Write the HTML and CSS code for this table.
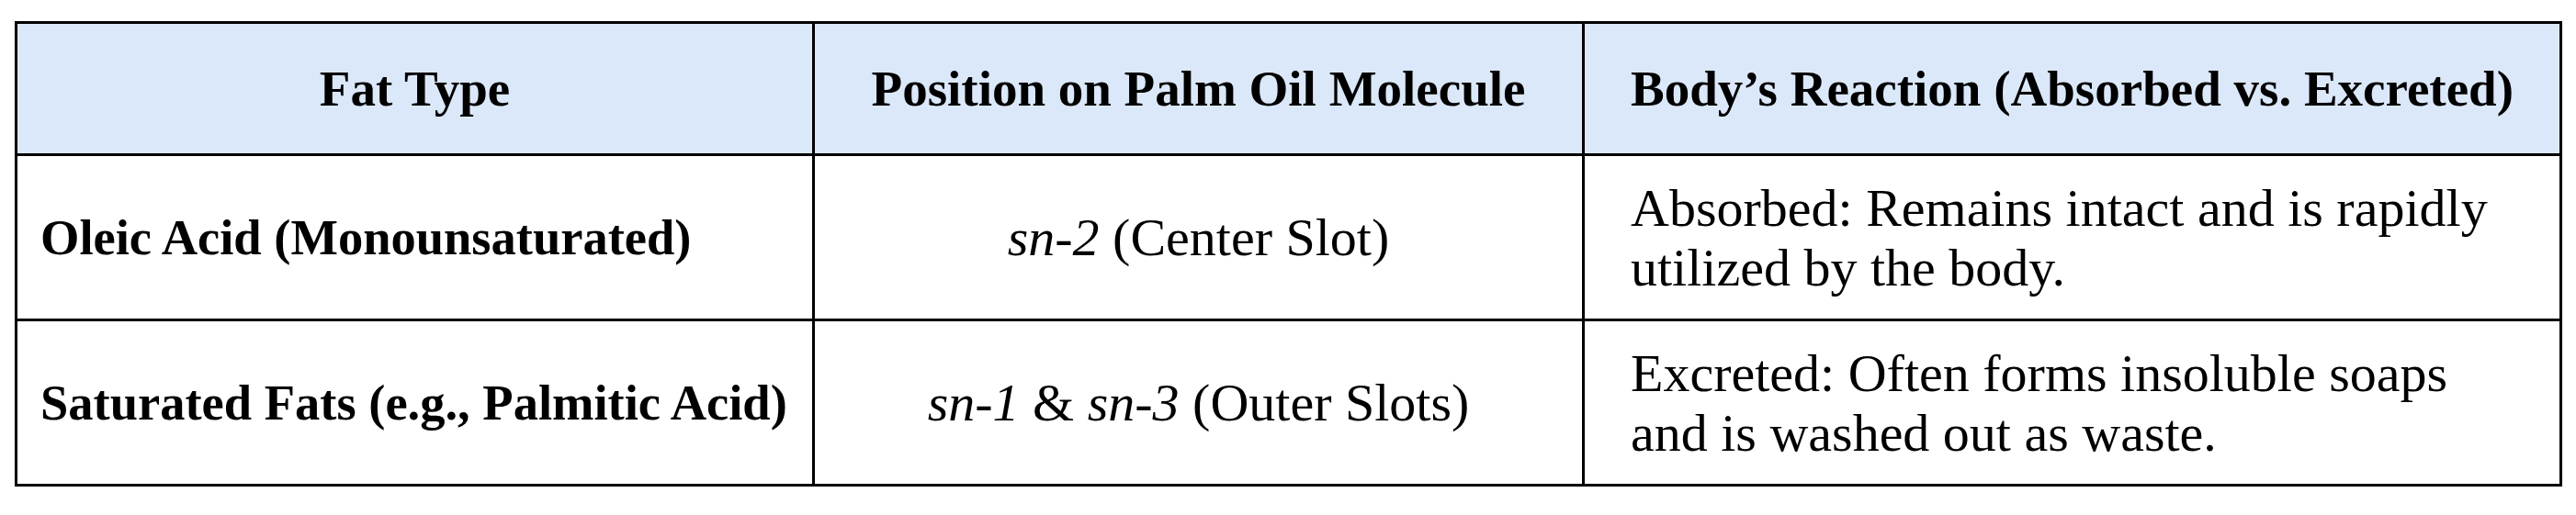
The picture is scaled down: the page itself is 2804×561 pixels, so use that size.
FILE: index.html
```html
<!DOCTYPE html>
<html lang="en">
<head>
<meta charset="utf-8">
<title>Palm Oil Fat Positions</title>
<link rel="stylesheet" href="styles.css">
</head>
<body>
<table class="fat-table">
  <colgroup>
    <col class="col-type">
    <col class="col-pos">
    <col class="col-react">
  </colgroup>
  <thead>
    <tr>
      <th>Fat Type</th>
      <th>Position on Palm Oil Molecule</th>
      <th>Body’s Reaction (Absorbed vs. Excreted)</th>
    </tr>
  </thead>
  <tbody>
    <tr>
      <td class="type">Oleic Acid (Monounsaturated)</td>
      <td class="pos"><em>sn-2</em> (Center Slot)</td>
      <td class="react">Absorbed: Remains intact and is rapidly utilized by the body.</td>
    </tr>
    <tr>
      <td class="type">Saturated Fats (e.g., Palmitic Acid)</td>
      <td class="pos"><em>sn-1</em> &amp; <em>sn-3</em> (Outer Slots)</td>
      <td class="react">Excreted: Often forms insoluble soaps and is washed out as waste.</td>
    </tr>
  </tbody>
</table>
</body>
</html>
```
FILE: styles.css
```css
html, body {
  margin: 0;
  background: #ffffff;
}

body {
  padding: 23px 0 0 16px;
  font-family: "Liberation Serif", "Times New Roman", serif;
  color: #000;
}

.fat-table {
  width: 2770px;
  border-collapse: collapse;
  table-layout: fixed;
}

.col-type { width: 868px; }
.col-pos { width: 838px; }
.col-react { width: 1064px; }

.fat-table th,
.fat-table td {
  border: 3px solid #000;
  vertical-align: middle;
}

.fat-table th {
  background: #dbe8f9;
  height: 141px;
  font-size: 55px;
  font-weight: bold;
  text-align: center;
  padding: 0 10px;
  white-space: nowrap;
}

.fat-table td {
  height: 177px;
  font-size: 58px;
  line-height: 65px;
}

.fat-table td.type {
  font-weight: bold;
  font-size: 54.5px;
  padding: 0 0 0 25px;
  text-align: left;
  white-space: nowrap;
}

.fat-table td.pos {
  text-align: center;
  padding: 0 20px;
}

.fat-table td.pos em {
  font-style: italic;
}

.fat-table td.react {
  text-align: left;
  padding: 0 50px 0 50px;
}
```
